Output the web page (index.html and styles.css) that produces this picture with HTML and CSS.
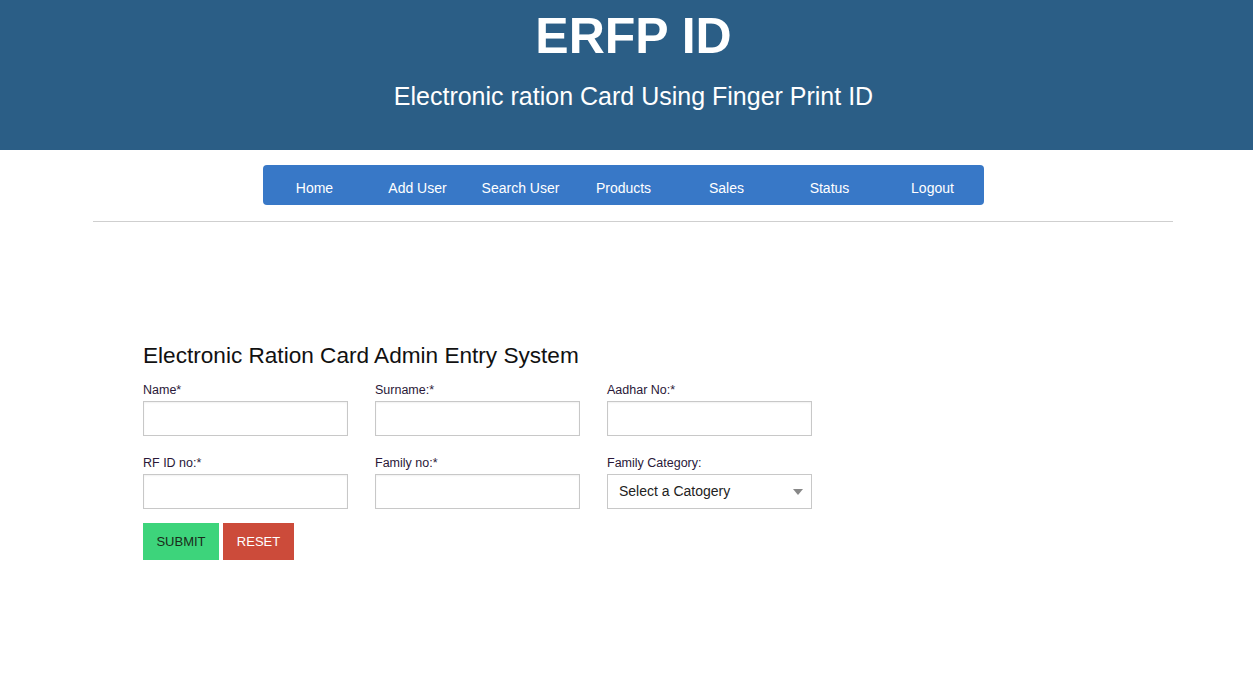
FILE: index.html
```html
<!DOCTYPE html>
<html>
<head>
<meta charset="utf-8">
<link rel="stylesheet" href="styles.css">
</head>
<body>
<header class="banner">
  <h1 class="banner-title">ERFP ID</h1>
  <p class="banner-sub">Electronic ration Card Using Finger Print ID</p>
</header>
<nav class="nav-wrap">
  <ul class="nav">
    <li>Home</li>
    <li>Add User</li>
    <li>Search User</li>
    <li>Products</li>
    <li>Sales</li>
    <li>Status</li>
    <li>Logout</li>
  </ul>
</nav>
<hr class="divider">
<main class="content">
  <h2 class="form-title">Electronic Ration Card Admin Entry System</h2>
  <form class="form">
    <div class="grid">
      <label class="field"><span class="lbl">Name*</span><input class="inp" type="text"></label>
      <label class="field"><span class="lbl">Surname:*</span><input class="inp" type="text"></label>
      <label class="field"><span class="lbl">Aadhar No:*</span><input class="inp" type="text"></label>
      <label class="field"><span class="lbl">RF ID no:*</span><input class="inp" type="text"></label>
      <label class="field"><span class="lbl">Family no:*</span><input class="inp" type="text"></label>
      <label class="field"><span class="lbl">Family Category:</span>
        <span class="select">Select a Catogery<span class="caret"></span></span>
      </label>
    </div>
    <div class="buttons">
      <button type="button" class="btn btn-submit">SUBMIT</button>
      <button type="button" class="btn btn-reset">RESET</button>
    </div>
  </form>
</main>
</body>
</html>
```
FILE: styles.css
```css
* { box-sizing: border-box; }
html, body { margin: 0; padding: 0; background: #fff; }
body { font-family: "Liberation Sans", Arial, sans-serif; color: #222; }

.banner {
  background: #2b5e86;
  height: 150px;
  color: #fff;
  text-align: center;
  padding-top: 10px;
  padding-left: 14px;
}
.banner-title {
  margin: 0;
  font-size: 50px;
  font-weight: bold;
  line-height: 52px;
}
.banner-sub {
  margin: 19px 0 0;
  font-size: 25px;
  line-height: 30px;
}

.nav-wrap {
  display: flex;
  justify-content: center;
  padding-top: 15px;
  padding-right: 6px;
}
.nav {
  list-style: none;
  margin: 0;
  padding: 0;
  width: 721px;
  height: 40px;
  background: #3878c7;
  border-radius: 4px;
  display: flex;
}
.nav li {
  flex: 1;
  color: #fff;
  font-size: 14px;
  text-align: center;
  line-height: 46px;
}

.divider {
  width: 1080px;
  margin: 16px 0 0 93px;
  border: 0;
  border-top: 1px solid #cfcfcf;
  height: 0;
}

.content {
  padding: 120px 0 0 143px;
}
.form-title {
  margin: 0;
  font-size: 22.6px;
  font-weight: normal;
  color: #111;
  line-height: 28px;
}
.grid {
  margin-top: 13px;
  display: grid;
  grid-template-columns: repeat(3, 205px);
  column-gap: 27px;
  row-gap: 20px;
}
.field { display: flex; flex-direction: column; }
.lbl {
  font-size: 12.5px;
  color: #2a1838;
  line-height: 14px;
  margin-bottom: 4px;
}
.inp {
  width: 205px;
  height: 35px;
  border: 1px solid #c8c8c8;
  box-shadow: inset 0 1px 2px rgba(0,0,0,0.06);
  margin: 0;
  font: inherit;
}
.select {
  position: relative;
  width: 205px;
  height: 35px;
  border: 1px solid #c8c8c8;
  font-size: 14px;
  color: #222;
  line-height: 33px;
  padding-left: 11px;
}
.caret {
  position: absolute;
  right: 8px;
  top: 14px;
  width: 0;
  height: 0;
  border-left: 5px solid transparent;
  border-right: 5px solid transparent;
  border-top: 6px solid #888;
}
.buttons {
  display: flex;
  gap: 4px;
  margin-top: 14px;
}
.btn {
  border: 0;
  height: 37px;
  font-family: inherit;
  font-size: 13px;
  padding: 0;
  margin: 0;
  cursor: pointer;
}
.btn-submit { background: #3dd47b; color: #1a2a1a; width: 76px; }
.btn-reset { background: #cc4b3a; color: #fff; width: 71px; }
```
